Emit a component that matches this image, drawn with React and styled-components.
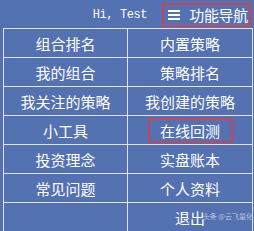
import React from "react"
import styled, { createGlobalStyle } from "styled-components"

const GlobalStyle = createGlobalStyle`
  html, body {
    margin: 0;
    padding: 0;
    background: #5471b2;
  }
`

const Page = styled.div`
  position: relative;
  width: 254px;
  height: 231px;
  overflow: hidden;
  background: #5471b2;
  font-family: "Noto Sans CJK SC", "Liberation Sans", sans-serif;
  color: #ffffff;
`

const Header = styled.div`
  display: flex;
  align-items: center;
  justify-content: flex-end;
  height: 28px;
  padding-right: 3px;
  box-sizing: border-box;
`

const Greeting = styled.span`
  font-family: "Liberation Mono", monospace;
  font-size: 12px;
  letter-spacing: -0.4px;
  margin-right: 15px;
  margin-top: 1px;
`

const NavToggle = styled.div`
  display: flex;
  align-items: center;
  gap: 9px;
  height: 24px;
  padding: 0 1px 0 4px;
  border: 2px solid #c5465a;
  box-sizing: border-box;
  margin-top: 1px;
  font-size: 15px;
  letter-spacing: -0.3px;
`

const Bars = styled.span`
  display: flex;
  flex-direction: column;
  gap: 2px;
  width: 12px;

  & > i {
    display: block;
    height: 2px;
    background: #ffffff;
  }
`

const Grid = styled.div`
  display: grid;
  grid-template-columns: 123px 124px;
  grid-auto-rows: 28px;
  gap: 1px;
  padding: 1px;
  margin-left: 3px;
  width: 250px;
  box-sizing: border-box;
  background: #dde6f4;
`

const Cell = styled.div`
  display: flex;
  align-items: center;
  justify-content: center;
  background: #5471b2;
  font-size: 15px;
  line-height: 1;
`

const Label = styled.span`
  display: inline-flex;
  align-items: center;
  justify-content: center;
  ${({ $marked }) =>
    $marked &&
    `
    width: 85px;
    height: 25px;
    border: 2.5px solid #c5465a;
    box-sizing: border-box;
  `}
`

const Watermark = styled.span`
  position: absolute;
  right: 1px;
  bottom: 10px;
  font-size: 7px;
  color: #c9cedb;
  opacity: 0.9;
`

const items = [
  ["组合排名", "内置策略"],
  ["我的组合", "策略排名"],
  ["我关注的策略", "我创建的策略"],
  ["小工具", "在线回测", true],
  ["投资理念", "实盘账本"],
  ["常见问题", "个人资料"],
  ["", "退出"],
]

const App = () => (
  <Page>
    <GlobalStyle />
    <Header>
      <Greeting>Hi, Test</Greeting>
      <NavToggle>
        <Bars>
          <i />
          <i />
          <i />
        </Bars>
        功能导航
      </NavToggle>
    </Header>
    <Grid>
      {items.map(([left, right, marked]) => (
        <React.Fragment key={left + right}>
          <Cell>
            <Label>{left}</Label>
          </Cell>
          <Cell>
            <Label $marked={marked}>{right}</Label>
          </Cell>
        </React.Fragment>
      ))}
    </Grid>
    <Watermark>头条 @云飞量化</Watermark>
  </Page>
)

export default App
